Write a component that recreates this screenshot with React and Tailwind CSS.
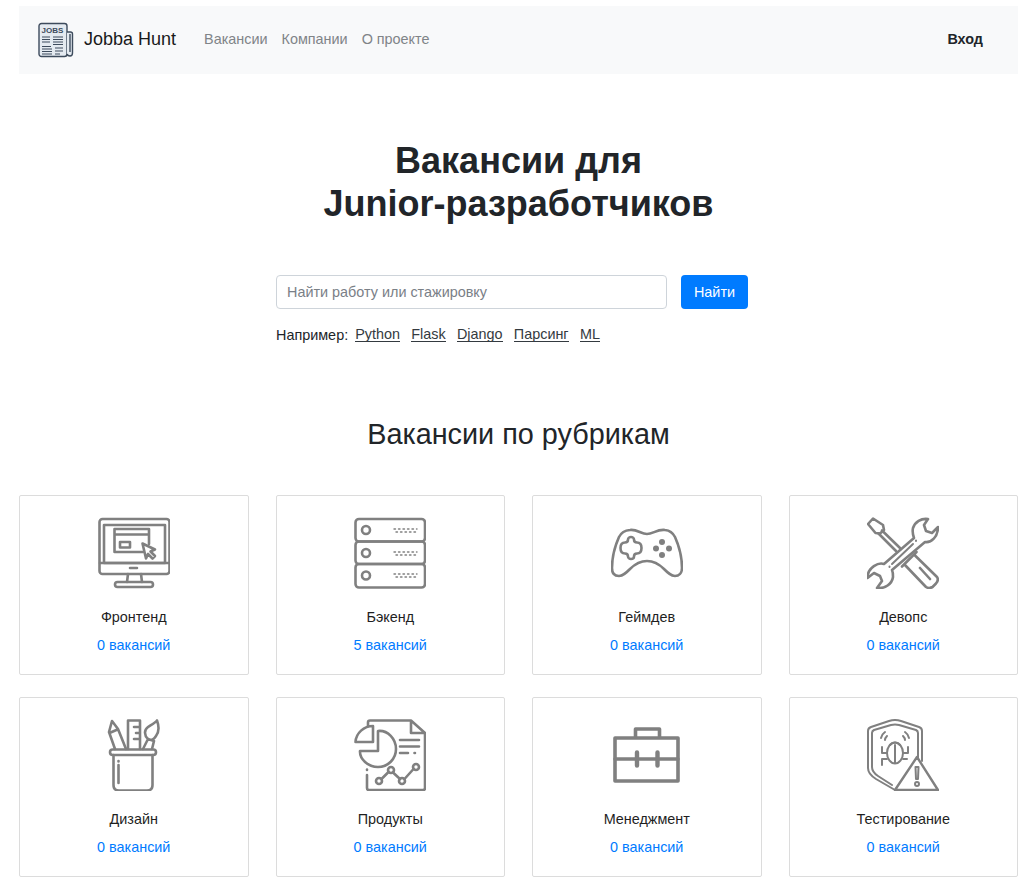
import React from 'react';

const Logo = () => (
  <svg width="36" height="36" viewBox="0 0 36 36" fill="none" stroke="#3d4b5c" strokeWidth="1.4">
    <rect x="1" y="1.5" width="28" height="33" rx="2.5" fill="#e4eaf0" />
    <path d="M29 10h3.5q2 0 2 2v19q0 3-2.5 3t-3-2" fill="#e4eaf0" />
    <path d="M32 12v18" />
    <text x="14.500" y="11" textAnchor="middle" fontSize="8" fontWeight="700" fill="#3d4b5c" stroke="none" fontFamily="'Liberation Sans', sans-serif">JOBS</text>
    <path d="M4 15h8M4 17.500h8M4 20h8M15 15h10M15 17.500h10M15 20h10M15 22.500h10M4 24.500h9M4 27h10M4 29.500h10M4 32h10M17 26h8M17 29h8M17 32h5" strokeWidth="1.200" />
  </svg>
);

const Icon = ({ children, strokeWidth = 2.6 }) => (
  <svg
    width="72"
    height="72"
    viewBox="0 0 72 72"
    fill="none"
    stroke="#808080"
    strokeWidth={strokeWidth}
    strokeLinecap="round"
    strokeLinejoin="round"
    className="block"
  >
    {children}
  </svg>
);

const icons = {
  frontend: (
    <Icon>
      <rect x="1.500" y="2" width="70" height="55" rx="3" />
      <path d="M6 46V8h61v38z" />
      <path d="M2 46h69M32 51h7" />
      <path d="M30 57l-1 8M43 57l1 8" />
      <rect x="17" y="65" width="38" height="5" rx="2.500" />
      <path d="M45 35H16.500V12h34.500v15M16.500 17.500H51" />
      <rect x="22" y="25" width="10" height="5.500" />
      <path d="M44.500 26.500l12.500 6-4.500 2 4.500 4.500-2.500 2.500-4.500-4.500-2 4.500z" />
    </Icon>
  ),
  backend: (
    <Icon>
      <rect x="1.500" y="2" width="69.500" height="22.500" rx="3.500" />
      <rect x="1.500" y="24.500" width="69.500" height="22.500" rx="3.500" />
      <rect x="1.500" y="47" width="69.500" height="23.500" rx="3.500" />
      <circle cx="12" cy="13" r="4" />
      <circle cx="12" cy="36" r="4" />
      <circle cx="12" cy="58.500" r="4" />
      <path
        d="M40 12h23M42 15h21M40 35h23M42 38h21M40 57h23M42 60h21"
        strokeWidth="1.400"
        strokeDasharray="1.500 3"
      />
    </Icon>
  ),
  gamedev: (
    <Icon>
      <path d="M19 13c7-1 11 4 17 4s10-5 18-4c5 .500 8 3 10 7 4 9 7 20 7 31 0 5-3 8-7 8-4 0-7-3-11-7-4-4-10-8-17-8s-13 4-17 8c-4 4-7 7-11 7-5 0-7-3-7-8 0-11 3-22 7-31 2-4 5-6.500 11-7z" />
      <path d="M17 22.500c0-1.500 1.500-2.500 3-2.500s3 1 3 2.500c0 2 1 3 3 3 3 0 4.500 2.500 4.500 5.500s-1.500 5.500-4.500 5.500c-2 0-3 1-3 3s-1.500 2.500-3 2.500-3-1-3-2.500c0-2-1-3-3-3-3 0-4.500-2.500-4.500-5.500s1.500-5.500 4.500-5.500c2 0 3-1 3-3z" />
      <g fill="#808080" stroke="none">
        <circle cx="51" cy="25" r="3" />
        <circle cx="51" cy="38" r="3" />
        <circle cx="45" cy="31.500" r="3" />
        <circle cx="58" cy="31.500" r="3" />
      </g>
    </Icon>
  ),
  devops: (
    <Icon>
      <path d="M6 1.500L16 8 17 13 13 16.500 8.500 16 1 7z" />
      <path d="M15 13.500L33 31M11.500 16.500L29 34" />
      <path d="M47 37.500L70 60Q72 63 69 66.500L65.500 70Q62 72 59 70L37.500 47.500M49.500 35L35 49.500M53 51L63 62" />
      <path
        d="M61 2C54 1 48 5 46 11C45 15 46 18 47 21L17 47C12 45 0.500 50 0.500 61L7 56 13 59 15 64 10 71C18 72 25 67 26 60C26 57 26 55 25 53L58 25C64 26 71 20 71 10L65 16 59 14 57 8z"
        fill="#fff"
      />
      <path d="M46 27L25 47M49 23.500v.500M22.500 49.500v.500" strokeWidth="2" />
    </Icon>
  ),
  design: (
    <Icon>
      <rect x="12" y="30.500" width="46" height="5.500" rx="2.750" />
      <path d="M15.500 36v30q0 5.500 5.500 5.500h28q5.500 0 5.500-5.500V36" />
      <path d="M20.500 46v18M20.500 42v.500" />
      <path d="M30 30V1.500h12V30M36 8h6M38 14h4M36 20h6" />
      <path d="M17 30L11 13 14 2 20 10 28 30M11.500 14l8-3.500" />
      <path d="M45 30L50 20 56 22 54 30M50 20C46 16 46 11 50 8 53 6 57 4 59 1.500 61 7 61 13 58 17 56 20 54 22 50 20z" />
    </Icon>
  ),
  products: (
    <Icon>
      <path d="M14 7V3.500Q14 1.500 16 1.500H57L71 14V69Q71 71 69 71H15Q13 71 13 69V56M13 50.500V51M57 2V14H71" />
      <path d="M24 12c10-1 18 8 18 18s-8 18-18 18S5.500 40 6 32h18z" />
      <path d="M19 7v16H1.500C2 14 10 7 19 7z" />
      <path d="M46 21h19M46 27.500h19M46 34h8M60.500 34h.500" />
      <circle cx="25" cy="62" r="3" />
      <circle cx="37" cy="51" r="3" />
      <circle cx="48" cy="62" r="3" />
      <circle cx="62" cy="48" r="3" />
      <path d="M27.500 60l7-7M39 53.500l7 6.500M50.500 60l9-10" />
    </Icon>
  ),
  management: (
    <Icon strokeWidth="3.600">
      <rect x="4" y="19" width="63" height="43" />
      <path d="M24.500 18v-8h24v8M4 40h63" />
      <path d="M26 33.500v13M46.500 33.500v13" strokeWidth="4.400" />
    </Icon>
  ),
  testing: (
    <Icon strokeWidth="2">
      <path d="M28 71L9 60Q1 55 1 49V12Q1 9 4 8L22 2Q28 0 34 2L52 8Q55 9 55 12V42" />
      <path d="M25 66L11 57Q5 53 5 48V14Q5 12 7 11L24 6Q28 5 32 6L49 11Q51 12 51 14V40" />
      <ellipse cx="28" cy="34" rx="8" ry="10.500" />
      <path d="M23 26q5-5 10 0M20 34H15V28M36 34h5v-6M20 40H15v6M36 40h4M28 26V44" />
      <path d="M14 19q1-4 4-6M18 21q0-2 2-4M42 19q-1-4-4-6M38 21q0-2-2-4" />
      <path d="M50 38L71 71H28z" fill="#fff" strokeWidth="2.400" />
      <path d="M48.500 48h3L51 60h-2z" />
      <circle cx="50" cy="65" r="2" />
    </Icon>
  ),
};

const categories = [
  { key: 'frontend', title: 'Фронтенд', count: '0 вакансий' },
  { key: 'backend', title: 'Бэкенд', count: '5 вакансий' },
  { key: 'gamedev', title: 'Геймдев', count: '0 вакансий' },
  { key: 'devops', title: 'Девопс', count: '0 вакансий' },
  { key: 'design', title: 'Дизайн', count: '0 вакансий' },
  { key: 'products', title: 'Продукты', count: '0 вакансий' },
  { key: 'management', title: 'Менеджмент', count: '0 вакансий' },
  { key: 'testing', title: 'Тестирование', count: '0 вакансий' },
];

const tags = ['Python', 'Flask', 'Django', 'Парсинг', 'ML'];

const App = () => {
  return (
    <div className="min-h-[895px] bg-white pl-[19px] pr-[10px] pt-[6px] pb-[18px] text-[14.4px] text-[#212529] font-['Liberation_Sans',Arial,sans-serif]">
      {/* Navbar */}
      <nav className="flex h-[68px] items-center bg-[#f8f9fa] pl-[19px] pr-[35px]">
        <a href="#" className="flex items-center gap-[10px] text-[18px] text-[#1a1a1a]">
          <Logo />
          <span className="relative -top-px">Jobba Hunt</span>
        </a>
        <ul className="ml-[28px] flex gap-[14px] text-[#808488]">
          <li>Вакансии</li>
          <li>Компании</li>
          <li>О проекте</li>
        </ul>
        <a href="#" className="ml-auto font-bold text-[#212529]">Вход</a>
      </nav>

      {/* Hero */}
      <h1 className="mt-[65px] text-center text-[36px] leading-[43px] font-bold">
        Вакансии для
        <br />
        Junior-разработчиков
      </h1>

      {/* Search */}
      <div className="pl-[257px]">
        <form className="mt-[50px] flex gap-[14px]">
          <input
            type="text"
            placeholder="Найти работу или стажировку"
            className="h-[34px] w-[391px] rounded border border-[#ced4da] px-[10px] placeholder:text-[#7a8087]"
          />
          <button type="button" className="h-[34px] w-[67px] rounded bg-[#007bff] pt-px text-white">
            Найти
          </button>
        </form>
        <div className="mt-[14px] flex gap-[11.3px] leading-[22px]">
          <span className="mr-[-4.3px] mt-px">Например:</span>
          {tags.map((tag) => (
            <a key={tag} href="#" className="mt-[3px] h-[16px] border-b border-[#343a40] leading-[17px] text-[#343a40]">{tag}</a>
          ))}
        </div>
      </div>

      <h2 className="mt-[70px] text-center text-[28.8px] leading-[36px]">Вакансии по рубрикам</h2>

      {/* Categories */}
      <div className="mt-[43px] grid grid-cols-4 gap-x-[27px] gap-y-[22px]">
        {categories.map((cat) => (
          <div key={cat.key} className="flex h-[180px] flex-col items-center rounded-[2px] border border-[#dcdcdc] pt-[21px]">
            {icons[cat.key]}
            <div className="mt-[18px] leading-[20px] text-[#1f1f1f]">{cat.title}</div>
            <div className="mt-[8px] leading-[20px] text-[#007bff]">{cat.count}</div>
          </div>
        ))}
      </div>
    </div>
  );
};

export default App;
